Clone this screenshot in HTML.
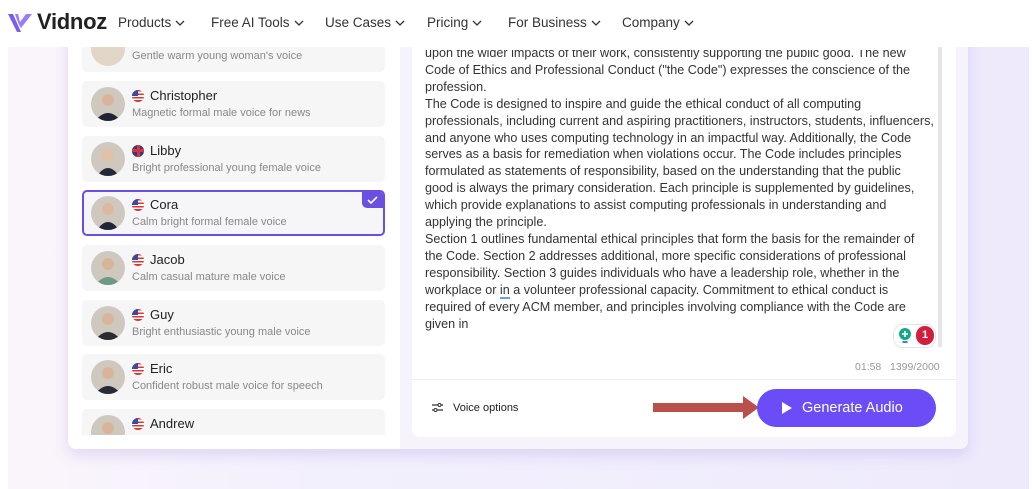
<!DOCTYPE html>
<html><head><meta charset="utf-8">
<style>
*{box-sizing:border-box;margin:0;padding:0}
body{width:1033px;height:489px;overflow:hidden;font-family:"Liberation Sans",sans-serif;background:#fff;position:relative}
.bg{position:absolute;left:8px;top:47px;width:1021px;height:442px;background:linear-gradient(90deg,#fbf5fb 0%,#f3f0fd 30%,#eeeafc 100%)}
.hdr{position:absolute;left:0;top:0;width:1033px;height:47px;background:#fff;z-index:5}
.logo{position:absolute;left:7px;top:9px;display:flex;align-items:center}
.logo span{font-size:22px;font-weight:bold;color:#222;margin-left:4px;letter-spacing:-0.3px}
.nav{position:absolute;top:15px;font-size:13.5px;color:#333}
.nav svg{margin-left:4px;vertical-align:middle}
.card{position:absolute;left:68px;top:30px;width:900px;height:419px;background:#fff;border-radius:8px;box-shadow:0 6px 14px rgba(150,130,220,.25);overflow:hidden}
.rarea{position:absolute;left:332px;top:0;width:568px;height:419px;background:#f6f3fd}
.tp{position:absolute;left:344px;top:0;width:544px;height:407px;background:#fff;border-radius:0 0 8px 8px}
.item{position:absolute;left:14px;width:303px;height:46px;background:#f6f6f7;border-radius:5px}
.item .av{position:absolute;left:9px;top:6px;width:34px;height:34px;border-radius:50%;background:#cfc8be;overflow:hidden}
.item .nm{position:absolute;left:50px;top:7px;font-size:13px;color:#222;display:flex;align-items:center}
.item .ds{position:absolute;left:50px;top:26px;font-size:11px;color:#888}
.flag{width:12px;height:12px;border-radius:50%;margin-right:6px;background:repeating-linear-gradient(#d33 0 1.7px,#fff 1.7px 3.4px);position:relative;overflow:hidden}
.flag:after{content:"";position:absolute;left:0;top:0;width:6px;height:6px;background:#3b4a9a}
.uk{background:#2a3d8f}
.uk:after{width:12px;height:12px;background:linear-gradient(#d33,#d33) center/12px 3px no-repeat,linear-gradient(#d33,#d33) center/3px 12px no-repeat}
.sel{background:#f6f6f8;border:2px solid #6a4fe0}
.txt{position:absolute;left:425px;top:45px;width:515px;font-size:12.6px;line-height:16.9px;color:#333;white-space:nowrap}
</style></head><body>
<div class="bg"></div>
<div class="hdr">
 <div class="logo"><svg width="26" height="24" viewBox="0 0 26 24"><path d="M1 4 L10 22 L14 22 L6 4Z" fill="#7a5cf0"/><path d="M8 4 Q12 16 14 18 L25 4 L19 4 L13 12 L11 4Z" fill="#9b7cf8"/></svg><span>Vidnoz</span></div>
 <div class="nav" style="left:118px">Products<svg width="10" height="6"><path d="M1 1l4 4 4-4" stroke="#333" fill="none" stroke-width="1.3"/></svg></div>
 <div class="nav" style="left:211px">Free AI Tools<svg width="10" height="6"><path d="M1 1l4 4 4-4" stroke="#333" fill="none" stroke-width="1.3"/></svg></div>
 <div class="nav" style="left:325px">Use Cases<svg width="10" height="6"><path d="M1 1l4 4 4-4" stroke="#333" fill="none" stroke-width="1.3"/></svg></div>
 <div class="nav" style="left:427px">Pricing<svg width="10" height="6"><path d="M1 1l4 4 4-4" stroke="#333" fill="none" stroke-width="1.3"/></svg></div>
 <div class="nav" style="left:508px">For Business<svg width="10" height="6"><path d="M1 1l4 4 4-4" stroke="#333" fill="none" stroke-width="1.3"/></svg></div>
 <div class="nav" style="left:622px">Company<svg width="10" height="6"><path d="M1 1l4 4 4-4" stroke="#333" fill="none" stroke-width="1.3"/></svg></div>
</div>
<div class="card">
 <div class="rarea"></div>
 <div class="tp"></div>
 <div class="item" style="top:-4px"><div class="av" style="background:#e2d6c8"></div><div class="ds" style="top:24px">Gentle warm young woman's voice</div></div>
 <div class="item" style="top:51px"><div class="av"><svg width="34" height="34"><circle cx="17" cy="13" r="6" fill="#d9b49c"/><path d="M4 34 Q17 18 30 34Z" fill="#1f2433"/></svg></div><div class="nm"><i class="flag"></i>Christopher</div><div class="ds">Magnetic formal male voice for news</div></div>
 <div class="item" style="top:106px"><div class="av"><svg width="34" height="34"><circle cx="17" cy="13" r="6" fill="#e3c0a8"/><path d="M6 34 Q17 18 28 34Z" fill="#222a3a"/></svg></div><div class="nm"><i class="flag uk"></i>Libby</div><div class="ds">Bright professional young female voice</div></div>
 <div class="item sel" style="top:160px"><div class="av" style="left:7px;top:4px"><svg width="34" height="34"><circle cx="17" cy="13" r="6" fill="#ddb8a0"/><path d="M6 34 Q17 18 28 34Z" fill="#1e2538"/></svg></div><div class="nm" style="left:48px;top:5px"><i class="flag"></i>Cora</div><div class="ds" style="left:48px;top:24px">Calm bright formal female voice</div>
  <div style="position:absolute;right:0;top:0;width:21px;height:16px;background:#6a4fe0;border-radius:0 3px 0 5px"><svg width="21" height="16"><path d="M6 8l3 3 6-6" stroke="#fff" fill="none" stroke-width="1.6"/></svg></div></div>
 <div class="item" style="top:215px"><div class="av"><svg width="34" height="34"><circle cx="17" cy="13" r="6" fill="#d8b49a"/><path d="M4 34 Q17 18 30 34Z" fill="#6d9a86"/></svg></div><div class="nm"><i class="flag"></i>Jacob</div><div class="ds">Calm casual mature male voice</div></div>
 <div class="item" style="top:270px"><div class="av"><svg width="34" height="34"><circle cx="17" cy="13" r="6" fill="#d8b49a"/><path d="M4 34 Q17 18 30 34Z" fill="#2a2a30"/></svg></div><div class="nm"><i class="flag"></i>Guy</div><div class="ds">Bright enthusiastic young male voice</div></div>
 <div class="item" style="top:324px"><div class="av"><svg width="34" height="34"><circle cx="17" cy="13" r="6" fill="#d8b49a"/><path d="M4 34 Q17 18 30 34Z" fill="#262b36"/></svg></div><div class="nm"><i class="flag"></i>Eric</div><div class="ds">Confident robust male voice for speech</div></div>
 <div class="item" style="top:379px;height:26px;border-radius:5px 5px 0 0;overflow:hidden"><div class="av"><svg width="34" height="34"><circle cx="17" cy="13" r="6" fill="#d8b49a"/><path d="M4 34 Q17 18 30 34Z" fill="#1f2433"/></svg></div><div class="nm"><i class="flag"></i>Andrew</div></div>
</div>
<div class="txt">upon the wider impacts of their work, consistently supporting the public good. The new<br>
Code of Ethics and Professional Conduct ("the Code") expresses the conscience of the<br>
profession.<br>
The Code is designed to inspire and guide the ethical conduct of all computing<br>
professionals, including current and aspiring practitioners, instructors, students, influencers,<br>
and anyone who uses computing technology in an impactful way. Additionally, the Code<br>
serves as a basis for remediation when violations occur. The Code includes principles<br>
formulated as statements of responsibility, based on the understanding that the public<br>
good is always the primary consideration. Each principle is supplemented by guidelines,<br>
which provide explanations to assist computing professionals in understanding and<br>
applying the principle.<br>
Section 1 outlines fundamental ethical principles that form the basis for the remainder of<br>
the Code. Section 2 addresses additional, more specific considerations of professional<br>
responsibility. Section 3 guides individuals who have a leadership role, whether in the<br>
workplace or <span style="border-bottom:2px solid #6aa0e0">in</span> a volunteer professional capacity. Commitment to ethical conduct is<br>
required of every ACM member, and principles involving compliance with the Code are<br>
given in</div>
<div style="position:absolute;left:412px;top:47px;width:526px;height:3px;background:#fff"></div>
<div style="position:absolute;left:938px;top:47px;width:4px;height:300px;background:#e6e6e8"></div>
<div style="position:absolute;left:893px;top:324px;width:43px;height:24px;border:1px solid #e5e5e5;border-radius:10px;background:#fff"></div>
<svg style="position:absolute;left:898px;top:327px" width="14" height="18"><circle cx="7" cy="7" r="6" fill="#1aa58a"/><path d="M7 4v6M4 7h6" stroke="#fff" stroke-width="1.6"/><rect x="4.5" y="14" width="5" height="2" fill="#1aa58a"/></svg>
<div style="position:absolute;left:916px;top:326px;width:18px;height:19px;border-radius:9px;background:#d21e3c;color:#fff;font-size:11px;font-weight:bold;text-align:center;line-height:19px">1</div>
<div style="position:absolute;left:855px;top:361px;font-size:10.5px;color:#999">01:58</div>
<div style="position:absolute;left:890px;top:361px;font-size:10.5px;color:#999">1399/2000</div>
<div style="position:absolute;left:412px;top:379px;width:544px;height:1px;background:#eee"></div>
<svg style="position:absolute;left:431px;top:402px" width="13" height="11"><path d="M1 3h6M10 3h2M1 8h2M6 8h6" stroke="#333" stroke-width="1.2"/><circle cx="8.5" cy="3" r="1.5" fill="none" stroke="#333"/><circle cx="4.5" cy="8" r="1.5" fill="none" stroke="#333"/></svg>
<div style="position:absolute;left:453px;top:402px;font-size:11px;color:#222">Voice options</div>
<svg style="position:absolute;left:653px;top:395px" width="108" height="26"><rect x="0" y="8" width="92" height="9" fill="#b9504c"/><path d="M90 1 L106 12.5 L90 24Z" fill="#b9504c"/></svg>
<div style="position:absolute;left:757px;top:389px;width:179px;height:38px;border-radius:19px;background:#6b4cf6;color:#fff;font-size:14.5px;line-height:38px"><svg style="position:absolute;left:25px;top:13px" width="10" height="12"><path d="M0 0L10 6L0 12Z" fill="#fff"/></svg><span style="position:absolute;left:45px">Generate Audio</span></div>
</body></html>
